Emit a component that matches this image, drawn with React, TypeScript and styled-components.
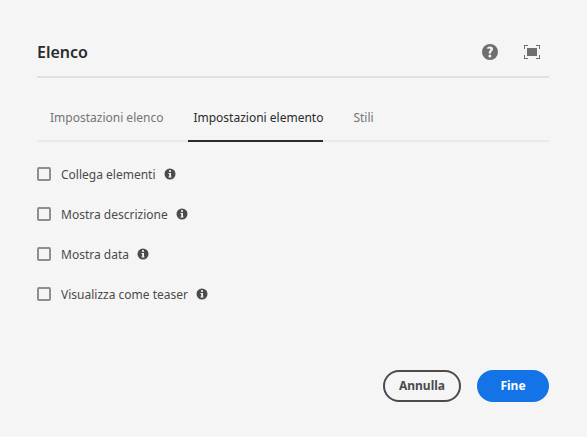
import React, { useState } from "react";
import styled, { createGlobalStyle } from "styled-components";

const GlobalStyle = createGlobalStyle`
  *, *::before, *::after { box-sizing: border-box; }
  body {
    margin: 0;
    background: #f5f5f5;
    color: #4b4b4b;
    font-family: "Noto Sans", "Open Sans", sans-serif;
    font-size: 12px;
    line-height: 20px;
  }
  button { font: inherit; cursor: pointer; }
`;

const Dialog = styled.main`
  display: flex;
  flex-direction: column;
  min-height: 100vh;
  padding: 28px 38px 35px 37px;
`;

const Header = styled.header`
  display: flex;
  align-items: center;
  justify-content: space-between;
  height: 50px;
  border-bottom: 2px solid #e1e1e1;
`;

const Title = styled.h1`
  margin: 0;
  color: #2c2c2c;
  font-size: 16px;
  font-weight: 600;
  line-height: 24px;
`;

const HeaderActions = styled.div`
  display: flex;
  gap: 10px;
`;

const IconButton = styled.button`
  display: flex;
  align-items: center;
  justify-content: center;
  width: 32px;
  height: 32px;
  padding: 0;
  border: 0;
  background: none;
  color: #6e6e6e;

  &:last-child { margin-right: 1px; }
`;

const TabList = styled.div`
  display: flex;
  gap: 25px;
  height: 48px;
  margin-top: 16px;
  padding-left: 8px;
  border-bottom: 2px solid #eaeaea;
`;

const Tab = styled.button<{ $active: boolean }>`
  height: 48px;
  padding: 6px 0 4px 5px;
  border: 0;
  border-bottom: 2px solid ${({ $active }) => ($active ? "#2c2c2c" : "transparent")};
  background: none;
  color: ${({ $active }) => ($active ? "#2c2c2c" : "#747474")};
  white-space: nowrap;
`;

const Options = styled.div`
  display: flex;
  flex: 1;
  flex-direction: column;
  gap: 20px;
  padding: 22px 0;
`;

const OptionRow = styled.div`
  display: flex;
  align-items: center;
  gap: 8px;
  height: 20px;
`;

const OptionLabel = styled.label`
  display: flex;
  align-items: center;
  gap: 10px;
  cursor: pointer;
`;

const OptionText = styled.span`
  padding-top: 2px;
`;

const Checkbox = styled.input`
  appearance: none;
  width: 14px;
  height: 14px;
  margin: 0;
  border: 2px solid #8e8e8e;
  border-radius: 2px;
  background: #f5f5f5;

  &:checked {
    background: #1473e6;
    border-color: #1473e6;
  }
`;

const Footer = styled.footer`
  display: flex;
  justify-content: flex-end;
  gap: 16px;
`;

const ActionButton = styled.button<{ $primary?: boolean }>`
  min-width: 72px;
  height: 32px;
  padding: 0 14px;
  border: 2px solid ${({ $primary }) => ($primary ? "#1473e6" : "#4b4b4b")};
  border-radius: 16px;
  background: ${({ $primary }) => ($primary ? "#1473e6" : "transparent")};
  color: ${({ $primary }) => ($primary ? "#ffffff" : "#4b4b4b")};
  && { font-weight: 700; }
`;

const HelpIcon = () => (
  <svg width="16" height="16" viewBox="0 0 16 16" aria-hidden="true">
    <circle cx="8" cy="8" r="8" fill="currentColor" />
    <path d="M5.3 5V3.2Q6.7 2.4 8.3 2.4Q11 2.6 11 5.1Q11 6.3 9.7 7.4Q8.9 8.2 9 9.4H6.8Q6.4 7.9 7.5 6.8Q8.4 6 8.4 5.3Q8.4 4.4 7.5 4.4Q6.3 4.4 5.3 5Z" fill="#f5f5f5" />
    <circle cx="7.9" cy="12" r="1.5" fill="#f5f5f5" />
  </svg>
);

const FullScreenIcon = () => (
  <svg width="16" height="14" viewBox="0 0 16 14" aria-hidden="true">
    <path d="M3 3h10v8H3zM0 0h4v1H1v3H0zM12 0h4v4h-1V1h-3zM0 10h1v3h3v1H0zM15 10h1v4h-4v-1h3z" fill="currentColor" />
  </svg>
);

const InfoIcon = () => (
  <svg width="12" height="12" viewBox="0 0 12 12" role="img" aria-label="Informazioni">
    <circle cx="6" cy="6" r="5.5" fill="#4b4b4b" />
    <circle cx="6" cy="3" r="1.1" fill="#f5f5f5" />
    <path d="M4.5 5H7v3.5h.5v1h-3v-1h.7V6h-.7z" fill="#f5f5f5" />
  </svg>
);

const tabs = ["Impostazioni elenco", "Impostazioni elemento", "Stili"];
const options = ["Collega elementi", "Mostra descrizione", "Mostra data", "Visualizza come teaser"];

export default function App() {
  const [active, setActive] = useState(1);
  return (
    <>
      <GlobalStyle />
      <Dialog>
        <Header>
          <Title>Elenco</Title>
          <HeaderActions>
            <IconButton type="button" aria-label="Aiuto"><HelpIcon /></IconButton>
            <IconButton type="button" aria-label="Schermo intero"><FullScreenIcon /></IconButton>
          </HeaderActions>
        </Header>
        <TabList role="tablist">
          {tabs.map((tab, i) => (
            <Tab key={tab} type="button" role="tab" aria-selected={i === active} $active={i === active} onClick={() => setActive(i)}>
              {tab}
            </Tab>
          ))}
        </TabList>
        <Options>
          {options.map((option) => (
            <OptionRow key={option}>
              <OptionLabel>
                <Checkbox type="checkbox" />
                <OptionText>{option}</OptionText>
              </OptionLabel>
              <InfoIcon />
            </OptionRow>
          ))}
        </Options>
        <Footer>
          <ActionButton type="button">Annulla</ActionButton>
          <ActionButton type="button" $primary>Fine</ActionButton>
        </Footer>
      </Dialog>
    </>
  );
}
